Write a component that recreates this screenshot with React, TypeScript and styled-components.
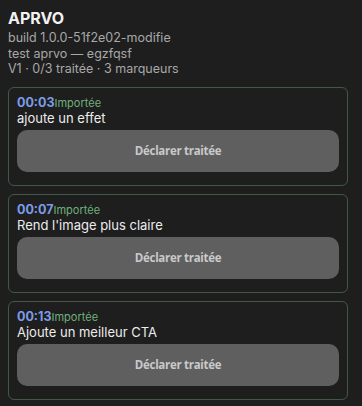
import React from "react";
import styled, { createGlobalStyle } from "styled-components";

const Global = createGlobalStyle`
  html, body { margin: 0; padding: 0; background: #1e1e1e; }
  body { font-family: Inter, "Noto Sans", sans-serif; color: #e6e6e6; }
  * { box-sizing: border-box; }
`;

const Page = styled.div`
  padding: 8px 14px 8px 8px;
  display: flex;
  flex-direction: column;
`;

const Header = styled.div`
  display: flex;
  flex-direction: column;
  margin-bottom: 10px;
`;

const Title = styled.h1`
  margin: 0 0 2px;
  font-size: 16px;
  font-weight: 700;
  color: #f2f2f2;
  line-height: 20px;
`;

const Meta = styled.div`
  font-size: 12.5px;
  line-height: 15.5px;
  color: #a8a8a8;
`;

const List = styled.div`
  display: flex;
  flex-direction: column;
  gap: 8px;
`;

const Card = styled.div`
  border: 1px solid #3f5a44;
  border-radius: 6px;
  padding: 8px 8px 13px;
  display: flex;
  flex-direction: column;
`;

const TopLine = styled.div`
  display: flex;
  align-items: baseline;
  line-height: 14px;
`;

const Time = styled.span`
  font-size: 12.5px;
  font-weight: 700;
  color: #7d9ce8;
`;

const Status = styled.span`
  font-size: 11px;
  color: #6fb07a;
`;

const Text = styled.div`
  font-size: 13px;
  line-height: 16px;
  color: #ececec;
  margin-bottom: 4px;
`;

const Button = styled.button`
  height: 42px;
  border: none;
  border-radius: 10px;
  background: #5f5f5f;
  color: #c9c9c9;
  font-family: "Open Sans", "Noto Sans", sans-serif;
  font-weight: 700;
  font-size: 11.5px;
  letter-spacing: -0.3px;
  cursor: pointer;
`;

const items = [
  { time: "00:03", text: "ajoute un effet" },
  { time: "00:07", text: "Rend l'image plus claire" },
  { time: "00:13", text: "Ajoute un meilleur CTA" },
];

export default function App() {
  return (
    <>
      <Global />
      <Page>
        <Header>
          <Title>APRVO</Title>
          <Meta>build 1.0.0-51f2e02-modifie</Meta>
          <Meta>test aprvo — egzfqsf</Meta>
          <Meta>V1 · 0/3 traitée · 3 marqueurs</Meta>
        </Header>
        <List>
          {items.map((it) => (
            <Card key={it.time}>
              <TopLine>
                <Time>{it.time}</Time>
                <Status>Importée</Status>
              </TopLine>
              <Text>{it.text}</Text>
              <Button>Déclarer traitée</Button>
            </Card>
          ))}
        </List>
      </Page>
    </>
  );
}
